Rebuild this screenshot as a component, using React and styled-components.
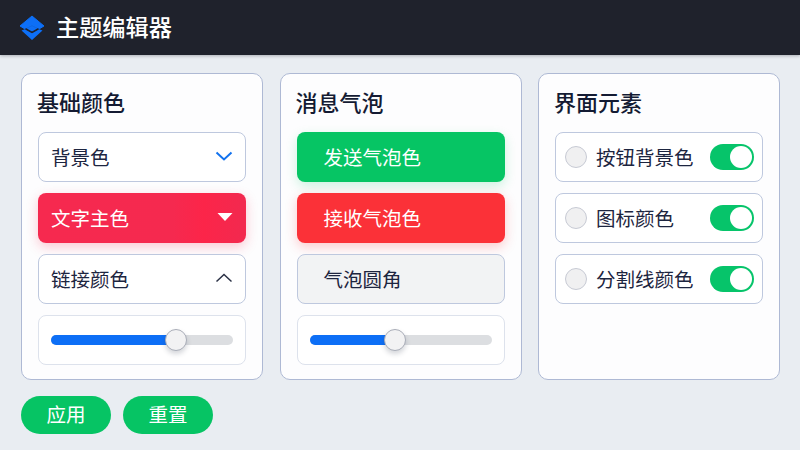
import React from "react";
import styled, { createGlobalStyle } from "styled-components";

const GlobalStyle = createGlobalStyle`
  html, body {
    margin: 0;
    padding: 0;
    width: 800px;
    height: 450px;
    overflow: hidden;
    background: #e9edf2;
    font-family: "Noto Sans CJK SC", "Noto Sans", sans-serif;
  }
  * {
    box-sizing: border-box;
  }
`;

const Page = styled.div`
  width: 800px;
  height: 450px;
  display: flex;
  flex-direction: column;
`;

const Header = styled.header`
  height: 55px;
  padding: 0 0 3px 19px;
  background: #1f222c;
  display: flex;
  align-items: center;
  gap: 11px;
  box-shadow: 0 1px 3px rgba(31, 34, 44, 0.3);
`;

const LogoMark = styled.svg`
  width: 26px;
  height: 26px;
  margin-top: 4px;
`;

const HeaderTitle = styled.h1`
  margin: 0;
  color: #ffffff;
  font-size: 23.2px;
  font-weight: 500;
  line-height: 32px;
`;

const Columns = styled.main`
  display: grid;
  grid-template-columns: 242px 242px 242px;
  gap: 16.5px;
  padding: 18px 0 0 21px;
`;

const Panel = styled.section`
  height: 307px;
  padding: 12px 16px 0;
  background: #fdfdfe;
  border: 1px solid #aeb9d4;
  border-radius: 10px;
  display: flex;
  flex-direction: column;
  gap: 11px;
`;

const PanelTitle = styled.h2`
  margin: 0 0 5px -1px;
  color: #141b33;
  font-size: 22px;
  font-weight: 500;
  line-height: 30px;
`;

const Field = styled.div`
  height: 50px;
  flex: none;
  padding: 0 12px 2px ${(p) => (p.$indent ? "26px" : "12px")};
  display: flex;
  align-items: center;
  justify-content: space-between;
  font-size: 19.5px;
  border-radius: 8px;
  color: ${(p) =>
    p.$tone && p.$tone !== "muted" ? "#ffffff" : "#1d2540"};
  background: ${(p) =>
    ({
      red: "linear-gradient(90deg, #f6294f 0%, #f5294f 65%, #fc2549 80%, #f2294f 100%)",
      green: "#06c564",
      coral: "#fb3138",
      muted: "#f2f3f4",
    })[p.$tone] || "#ffffff"};
  border: 1px solid
    ${(p) =>
      p.$tone === "muted" || !p.$tone ? "#bec8de" : "transparent"};
  box-shadow: ${(p) =>
    ({
      red: "0 4px 12px rgba(248, 40, 79, 0.25)",
      green: "0 4px 12px rgba(6, 197, 100, 0.2)",
      coral: "0 4px 12px rgba(251, 49, 56, 0.25)",
    })[p.$tone] || "none"};
`;

const SliderField = styled.div`
  height: 50px;
  flex: none;
  padding: 0 12px;
  display: flex;
  align-items: center;
  background: #ffffff;
  border: 1px solid #dde2ec;
  border-radius: 8px;
`;

const Track = styled.div`
  position: relative;
  width: 100%;
  height: 10px;
  background: #dcdee1;
  border-radius: 5px;
`;

const TrackFill = styled.div`
  height: 100%;
  background: #0d6ff6;
  border-radius: 5px 0 0 5px;
`;

const Thumb = styled.div`
  position: absolute;
  top: 50%;
  width: 22px;
  height: 22px;
  transform: translate(-50%, -50%);
  background: #f2f2f3;
  border: 1px solid #a9adb8;
  border-radius: 50%;
  box-shadow: 0 3px 5px rgba(40, 50, 70, 0.2);
`;

const OptionRow = styled.div`
  height: 50px;
  flex: none;
  padding: 0 8px 0 9px;
  display: flex;
  align-items: center;
  background: #ffffff;
  border: 1px solid #bec8de;
  border-radius: 8px;
`;

const Radio = styled.span`
  width: 22px;
  height: 22px;
  flex: none;
  background: #f0f0f1;
  border: 1px solid #c7cad4;
  border-radius: 50%;
`;

const OptionLabel = styled.span`
  margin: 0 0 2px 9px;
  flex: 1;
  color: #1d2540;
  font-size: 19.5px;
  white-space: nowrap;
`;

const Toggle = styled.span`
  width: 44px;
  height: 26px;
  flex: none;
  padding: 2px;
  display: flex;
  justify-content: flex-end;
  background: #06c46a;
  border-radius: 13px;
`;

const ToggleKnob = styled.span`
  width: 22px;
  height: 22px;
  background: #ffffff;
  border-radius: 50%;
`;

const Actions = styled.footer`
  display: flex;
  gap: 12px;
  padding: 16px 0 0 21px;
`;

const ActionButton = styled.button`
  width: 90px;
  height: 38px;
  padding: 0 0 2px;
  color: #ffffff;
  background: #06c464;
  border: none;
  border-radius: 19px;
  font-family: inherit;
  font-size: 19.5px;
  line-height: 1;
`;

const Logo = () => (
  <LogoMark viewBox="0 0 26 26" aria-hidden="true">
    <path
      d="M13 1 L25 11 L20 14 L13 10.5 L6 14 L1 11 Z"
      fill="#0d6ff6"
      stroke="#0d6ff6"
      strokeWidth="1"
      strokeLinejoin="round"
    />
    <path d="M6.5 14 L13 10.8 L19.5 14 L13 17 Z" fill="#0d6ff6" />
    <path
      d="M2.5 15.5 L6.5 14 L13 18 L19.5 14 L23.5 15.5 L13 25 Z"
      fill="#0d6ff6"
    />
    <path
      d="M6.5 13.8 L13 17.4 L19.5 13.8"
      fill="none"
      stroke="#1f222c"
      strokeWidth="1.6"
    />
  </LogoMark>
);

const ChevronDown = () => (
  <svg width="18" height="12" viewBox="0 0 18 12" aria-hidden="true">
    <path
      d="M1.5 2.5 L9 9.5 L16.5 2.5"
      fill="none"
      stroke="#1272ee"
      strokeWidth="2"
    />
  </svg>
);

const ChevronUp = () => (
  <svg width="18" height="12" viewBox="0 0 18 12" aria-hidden="true">
    <path
      d="M1.5 9.5 L9 2.5 L16.5 9.5"
      fill="none"
      stroke="#2a3145"
      strokeWidth="1.5"
    />
  </svg>
);

const CaretDown = () => (
  <svg width="16" height="10" viewBox="0 0 16 10" aria-hidden="true">
    <path d="M0.5 1 H15.5 L8 9 Z" fill="#ffffff" />
  </svg>
);

const Slider = ({ value }) => (
  <SliderField>
    <Track>
      <TrackFill style={{ width: `${value}%` }} />
      <Thumb style={{ left: `${value}%` }} />
    </Track>
  </SliderField>
);

const options = ["按钮背景色", "图标颜色", "分割线颜色"];

const App = () => {
  return (
    <Page>
      <GlobalStyle />
      <Header>
        <Logo />
        <HeaderTitle>主题编辑器</HeaderTitle>
      </Header>
      <Columns>
        <Panel>
          <PanelTitle>基础颜色</PanelTitle>
          <Field>
            背景色
            <ChevronDown />
          </Field>
          <Field $tone="red">
            文字主色
            <CaretDown />
          </Field>
          <Field>
            链接颜色
            <ChevronUp />
          </Field>
          <Slider value={68.7} />
        </Panel>
        <Panel>
          <PanelTitle>消息气泡</PanelTitle>
          <Field $tone="green" $indent>
            发送气泡色
          </Field>
          <Field $tone="coral" $indent>
            接收气泡色
          </Field>
          <Field $tone="muted" $indent>
            气泡圆角
          </Field>
          <Slider value={47} />
        </Panel>
        <Panel>
          <PanelTitle>界面元素</PanelTitle>
          {options.map((label) => (
            <OptionRow key={label}>
              <Radio />
              <OptionLabel>{label}</OptionLabel>
              <Toggle>
                <ToggleKnob />
              </Toggle>
            </OptionRow>
          ))}
        </Panel>
      </Columns>
      <Actions>
        <ActionButton>应用</ActionButton>
        <ActionButton>重置</ActionButton>
      </Actions>
    </Page>
  );
};

export default App;
